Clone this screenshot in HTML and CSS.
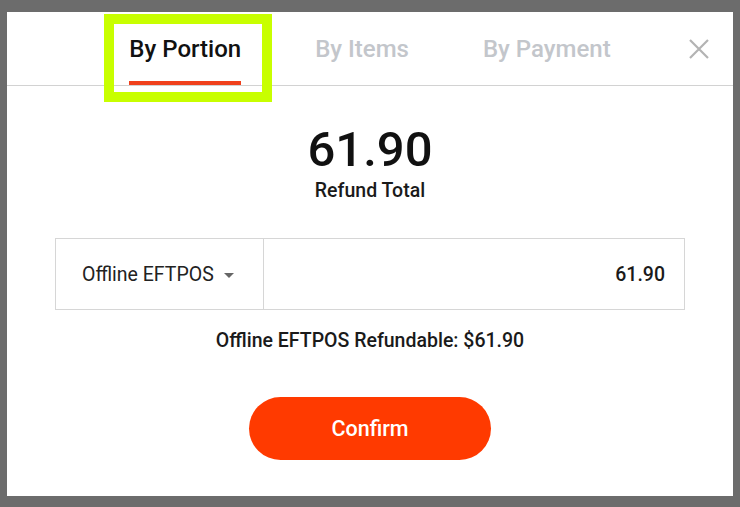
FILE: index.html
```html
<!DOCTYPE html>
<html>
<head>
<meta charset="utf-8">
<link rel="stylesheet" href="styles.css">
</head>
<body>
<div class="modal">
  <div class="header">
    <div class="spacer"></div>
    <div class="tabs">
      <div class="tab active">By Portion</div>
      <div class="tab">By Items</div>
      <div class="tab">By Payment</div>
    </div>
    <div class="close-wrap">
      <svg class="close" width="20" height="20" viewBox="0 0 20 20"><path d="M1 1L19 19M19 1L1 19" stroke="#b3b3b3" stroke-width="2.2" fill="none"/></svg>
    </div>
  </div>
  <div class="highlight"></div>
  <div class="body">
    <div class="total">61.90</div>
    <div class="total-label">Refund Total</div>
    <div class="entry">
      <div class="method">
        <span>Offline EFTPOS</span>
        <span class="caret"></span>
      </div>
      <div class="amount">61.90</div>
    </div>
    <div class="refundable">Offline EFTPOS Refundable: $61.90</div>
    <button class="confirm">Confirm</button>
  </div>
</div>
</body>
</html>
```
FILE: styles.css
```css
html, body {
  margin: 0;
  padding: 0;
}
body {
  background: #6c6c6c;
  width: 740px;
  height: 507px;
  overflow: hidden;
  font-family: Roboto, "Liberation Sans", sans-serif;
  padding-top: 12px;
  padding-left: 7px;
  box-sizing: border-box;
}
.modal {
  position: relative;
  width: 726px;
  height: 484px;
  background: #fff;
}
.header {
  display: grid;
  grid-template-columns: 1fr auto 1fr;
  height: 73px;
  border-bottom: 1px solid #d2d2d2;
}
.tabs {
  display: flex;
  gap: 74px;
}
.tab {
  box-sizing: border-box;
  height: 73px;
  padding-top: 23px;
  font-size: 24px;
  font-weight: 500;
  line-height: 28px;
  color: #c3c6cb;
  border-bottom: 4px solid transparent;
}
.tab.active {
  color: #111;
  border-bottom-color: #f0401c;
}
.close-wrap {
  display: flex;
  justify-content: flex-end;
  padding-top: 27px;
  padding-right: 24px;
}
.close {
  display: block;
}
.highlight {
  position: absolute;
  left: 97px;
  top: 2px;
  width: 148px;
  height: 68px;
  border: 10px solid #c8ff00;
}
.body {
  display: flex;
  flex-direction: column;
  align-items: center;
  padding-top: 36px;
}
.total {
  font-size: 49px;
  font-weight: 500;
  color: #111;
  line-height: 56px;
}
.total-label {
  font-size: 19.5px;
  font-weight: 500;
  color: #1a1a1a;
  line-height: 23px;
  margin-top: 1px;
}
.entry {
  margin-top: 36px;
  width: 630px;
  height: 72px;
  box-sizing: border-box;
  border: 1px solid #d6d6d6;
  display: flex;
}
.method {
  width: 208px;
  box-sizing: border-box;
  border-right: 1px solid #d6d6d6;
  display: flex;
  align-items: center;
  padding-left: 26px;
  font-size: 19.5px;
  color: #222;
}
.caret {
  width: 0;
  height: 0;
  margin-left: 10px;
  margin-top: 2px;
  border-left: 5px solid transparent;
  border-right: 5px solid transparent;
  border-top: 5px solid #666;
}
.amount {
  flex: 1;
  display: flex;
  align-items: center;
  justify-content: flex-end;
  padding-right: 19px;
  font-size: 19.5px;
  font-weight: 500;
  color: #1a1a1a;
}
.refundable {
  margin-top: 19px;
  font-size: 19.5px;
  font-weight: 500;
  line-height: 23px;
  color: #1a1a1a;
}
.confirm {
  margin-top: 45px;
  width: 242px;
  height: 63px;
  border: none;
  border-radius: 32px;
  background: #ff3a00;
  color: #fff;
  font-family: Roboto, "Liberation Sans", sans-serif;
  font-size: 21.5px;
  font-weight: 500;
  padding: 0;
}
```
